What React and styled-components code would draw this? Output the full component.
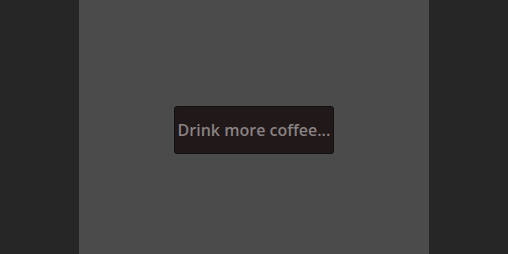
import styled, { createGlobalStyle } from "styled-components";

const GlobalStyle = createGlobalStyle`
  html, body {
    margin: 0;
    padding: 0;
    height: 100%;
    background: #262626;
  }
  #root {
    height: 100%;
  }
`;

const Page = styled.div`
  display: flex;
  justify-content: center;
  height: 100%;
`;

const Column = styled.main`
  box-sizing: border-box;
  width: 350px;
  height: 100%;
  padding-top: 6px;
  background: #4b4b4b;
  display: flex;
  align-items: center;
  justify-content: center;
`;

const Quote = styled.div`
  box-sizing: border-box;
  height: 48px;
  padding: 0 3px;
  display: flex;
  align-items: center;
  background: #201819;
  border: 1px solid #111;
  border-radius: 3px;
  font-family: "Open Sans", "Noto Sans", sans-serif;
  font-weight: 600;
  font-size: 16px;
  color: #8a8282;
  white-space: nowrap;
`;

const App = () => (
  <>
    <GlobalStyle />
    <Page>
      <Column>
        <Quote>Drink more coffee...</Quote>
      </Column>
    </Page>
  </>
);

export default App;
